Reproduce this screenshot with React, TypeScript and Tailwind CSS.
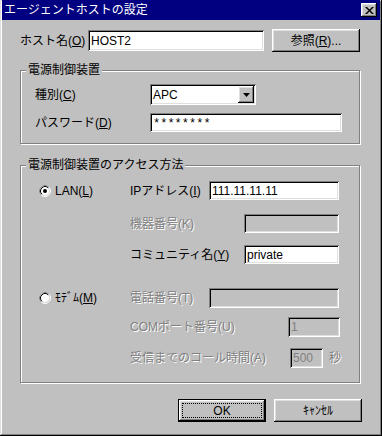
import React from 'react';

const raised =
  'shadow-[inset_-1px_-1px_#000,inset_1px_1px_#fff,inset_-2px_-2px_#808080,inset_2px_2px_#dfdfdf]';
const sunken =
  'shadow-[inset_1px_1px_#808080,inset_-1px_-1px_#fff,inset_2px_2px_#000,inset_-2px_-2px_#dfdfdf]';
const etched = 'border border-[#808080] shadow-[1px_1px_0_#fff,inset_1px_1px_0_#fff]';
const dim = 'text-[#808080] [text-shadow:1px_1px_0_#fff]';

type FieldProps = { value?: React.ReactNode; className: string; disabled?: boolean };

const Field: React.FC<FieldProps> = ({ value = '', className, disabled }) => (
  <div
    className={`${sunken} ${
      disabled ? 'bg-[#c0c0c0] text-[#808080]' : 'bg-white text-black'
    } flex items-center pl-[3px] shrink-0 ${className}`}
  >
    {value}
  </div>
);

const Radio: React.FC<{ checked?: boolean }> = ({ checked }) => (
  <svg width="12" height="12" viewBox="0 0 12 12" className="shrink-0">
    <circle cx="6" cy="6" r="5.5" fill="none" stroke="#fff" />
    <path d="M2.11 9.89A5.5 5.5 0 0 1 9.89 2.11" fill="none" stroke="#808080" />
    <circle cx="6" cy="6" r="4.5" fill="#fff" stroke="#dfdfdf" />
    <path d="M2.82 9.18A4.5 4.5 0 0 1 9.18 2.82" fill="none" stroke="#000" />
    {checked && <circle cx="6" cy="6" r="2" fill="#000" />}
  </svg>
);

const Combo: React.FC = () => (
  <div className={`${sunken} bg-white w-[106px] h-[21px] flex items-center justify-between pl-[3px] pr-[2px]`}>
    <span>APC</span>
    <div className={`${raised} bg-[#c0c0c0] w-[16px] h-[17px] flex items-center justify-center`}>
      <svg width="7" height="4" viewBox="0 0 7 4">
        <polygon points="0,0 7,0 3.5,4" fill="#000" />
      </svg>
    </div>
  </div>
);

export default function App() {
  return (
    <div className="w-[382px] h-[436px] bg-[#c0c0c0] flex flex-col font-['Liberation_Sans','Noto_Sans_CJK_JP',sans-serif] text-[12px] leading-none text-black shadow-[inset_-1px_-1px_#000,inset_1px_1px_#dfdfdf,inset_-2px_-2px_#808080,inset_2px_2px_#fff]">
      {/* Title bar */}
      <div className="mx-[2px] h-[20px] bg-[#000080] flex items-center justify-between pl-[2px] pr-[3px]">
        <span className="text-white">エージェントホストの設定</span>
        <div className={`${raised} bg-[#c0c0c0] w-[16px] h-[14px] flex items-center justify-center`}>
          <svg width="9" height="7" viewBox="0 0 9 7">
            <path d="M0 0h2l2.5 2.5L7 0h2L5.5 3.5 9 7H7L4.5 4.5 2 7H0l3.5-3.5z" fill="#000" />
          </svg>
        </div>
      </div>

      {/* Host name */}
      <div className="flex items-center h-[23px] mt-[9px] ml-[20px]">
        <span className="w-[68px]">
          ホスト名(<u>O</u>)
        </span>
        <Field value="HOST2" className="w-[176px] h-[21px]" />
        <div className={`${raised} ml-[8px] w-[88px] h-[23px] flex items-center justify-center`}>
          参照(<u>R</u>)...
        </div>
      </div>

      {/* Power control device */}
      <div className={`${etched} relative ml-[20px] mt-[18px] w-[340px] h-[74px]`}>
        <span className="absolute -top-[7px] left-[5px] bg-[#c0c0c0] px-[2px]">電源制御装置</span>
        <div className="flex items-center h-[21px] mt-[13px] pl-[14px]">
          <span className="w-[115px]">
            種別(<u>C</u>)
          </span>
          <Combo />
        </div>
        <div className="flex items-center h-[19px] mt-[8px] pl-[14px]">
          <span className="w-[115px]">
            パスワード(<u>D</u>)
          </span>
          <Field
            value={<span className="font-['Liberation_Mono',monospace] text-[12px] pt-[3px]">********</span>}
            className="w-[192px] h-[19px]"
          />
        </div>
      </div>

      {/* Access method */}
      <div className={`${etched} relative ml-[20px] mt-[21px] w-[340px] h-[218px]`}>
        <span className="absolute -top-[7px] left-[5px] bg-[#c0c0c0] px-[2px]">
          電源制御装置のアクセス方法
        </span>

        <div className="flex items-center h-[19px] mt-[15px]">
          <div className="w-[109px] flex items-center pl-[18px]">
            <Radio checked />
            <span className="ml-[4px]">
              LAN(<u>L</u>)
            </span>
          </div>
          <span className="w-[79px]">
            IPアドレス(<u>I</u>)
          </span>
          <Field value="111.11.11.11" className="w-[130px] h-[19px]" />
        </div>

        <div className="flex items-center h-[19px] mt-[14px] pl-[109px]">
          <span className={`w-[114px] ${dim}`}>機器番号(K)</span>
          <Field disabled className="w-[95px] h-[19px]" />
        </div>

        <div className="flex items-center h-[19px] mt-[12px] pl-[109px]">
          <span className="w-[114px]">
            コミュニティ名(<u>Y</u>)
          </span>
          <Field value="private" className="w-[95px] h-[19px]" />
        </div>

        <div className="flex items-center h-[20px] mt-[24px]">
          <div className="w-[109px] flex items-center pl-[18px]">
            <Radio />
            <span className="ml-[4px]">
              ﾓﾃﾞﾑ(<u>M</u>)
            </span>
          </div>
          <span className={`w-[79px] ${dim}`}>電話番号(T)</span>
          <Field disabled className="w-[130px] h-[20px]" />
        </div>

        <div className="flex items-center h-[20px] mt-[9px] pl-[109px]">
          <span className={`w-[158px] ${dim}`}>COMポート番号(U)</span>
          <Field disabled value="1" className="w-[52px] h-[20px]" />
        </div>

        <div className="flex items-center h-[20px] mt-[11px] pl-[109px]">
          <span className={`w-[160px] ${dim}`}>受信までのコール時間(A)</span>
          <Field disabled value="500" className="w-[33px] h-[20px]" />
          <span className={`ml-[6px] ${dim}`}>秒</span>
        </div>
      </div>

      {/* Buttons */}
      <div className="flex justify-end gap-[8px] mt-[16px] mr-[20px]">
        <div className="w-[88px] h-[23px] border border-black">
          <div className={`${raised} w-full h-full p-[3px]`}>
            <div className="w-full h-full border border-dotted border-black flex items-center justify-center">
              OK
            </div>
          </div>
        </div>
        <div className={`${raised} w-[88px] h-[23px] flex items-center justify-center`}>ｷｬﾝｾﾙ</div>
      </div>
    </div>
  );
}
